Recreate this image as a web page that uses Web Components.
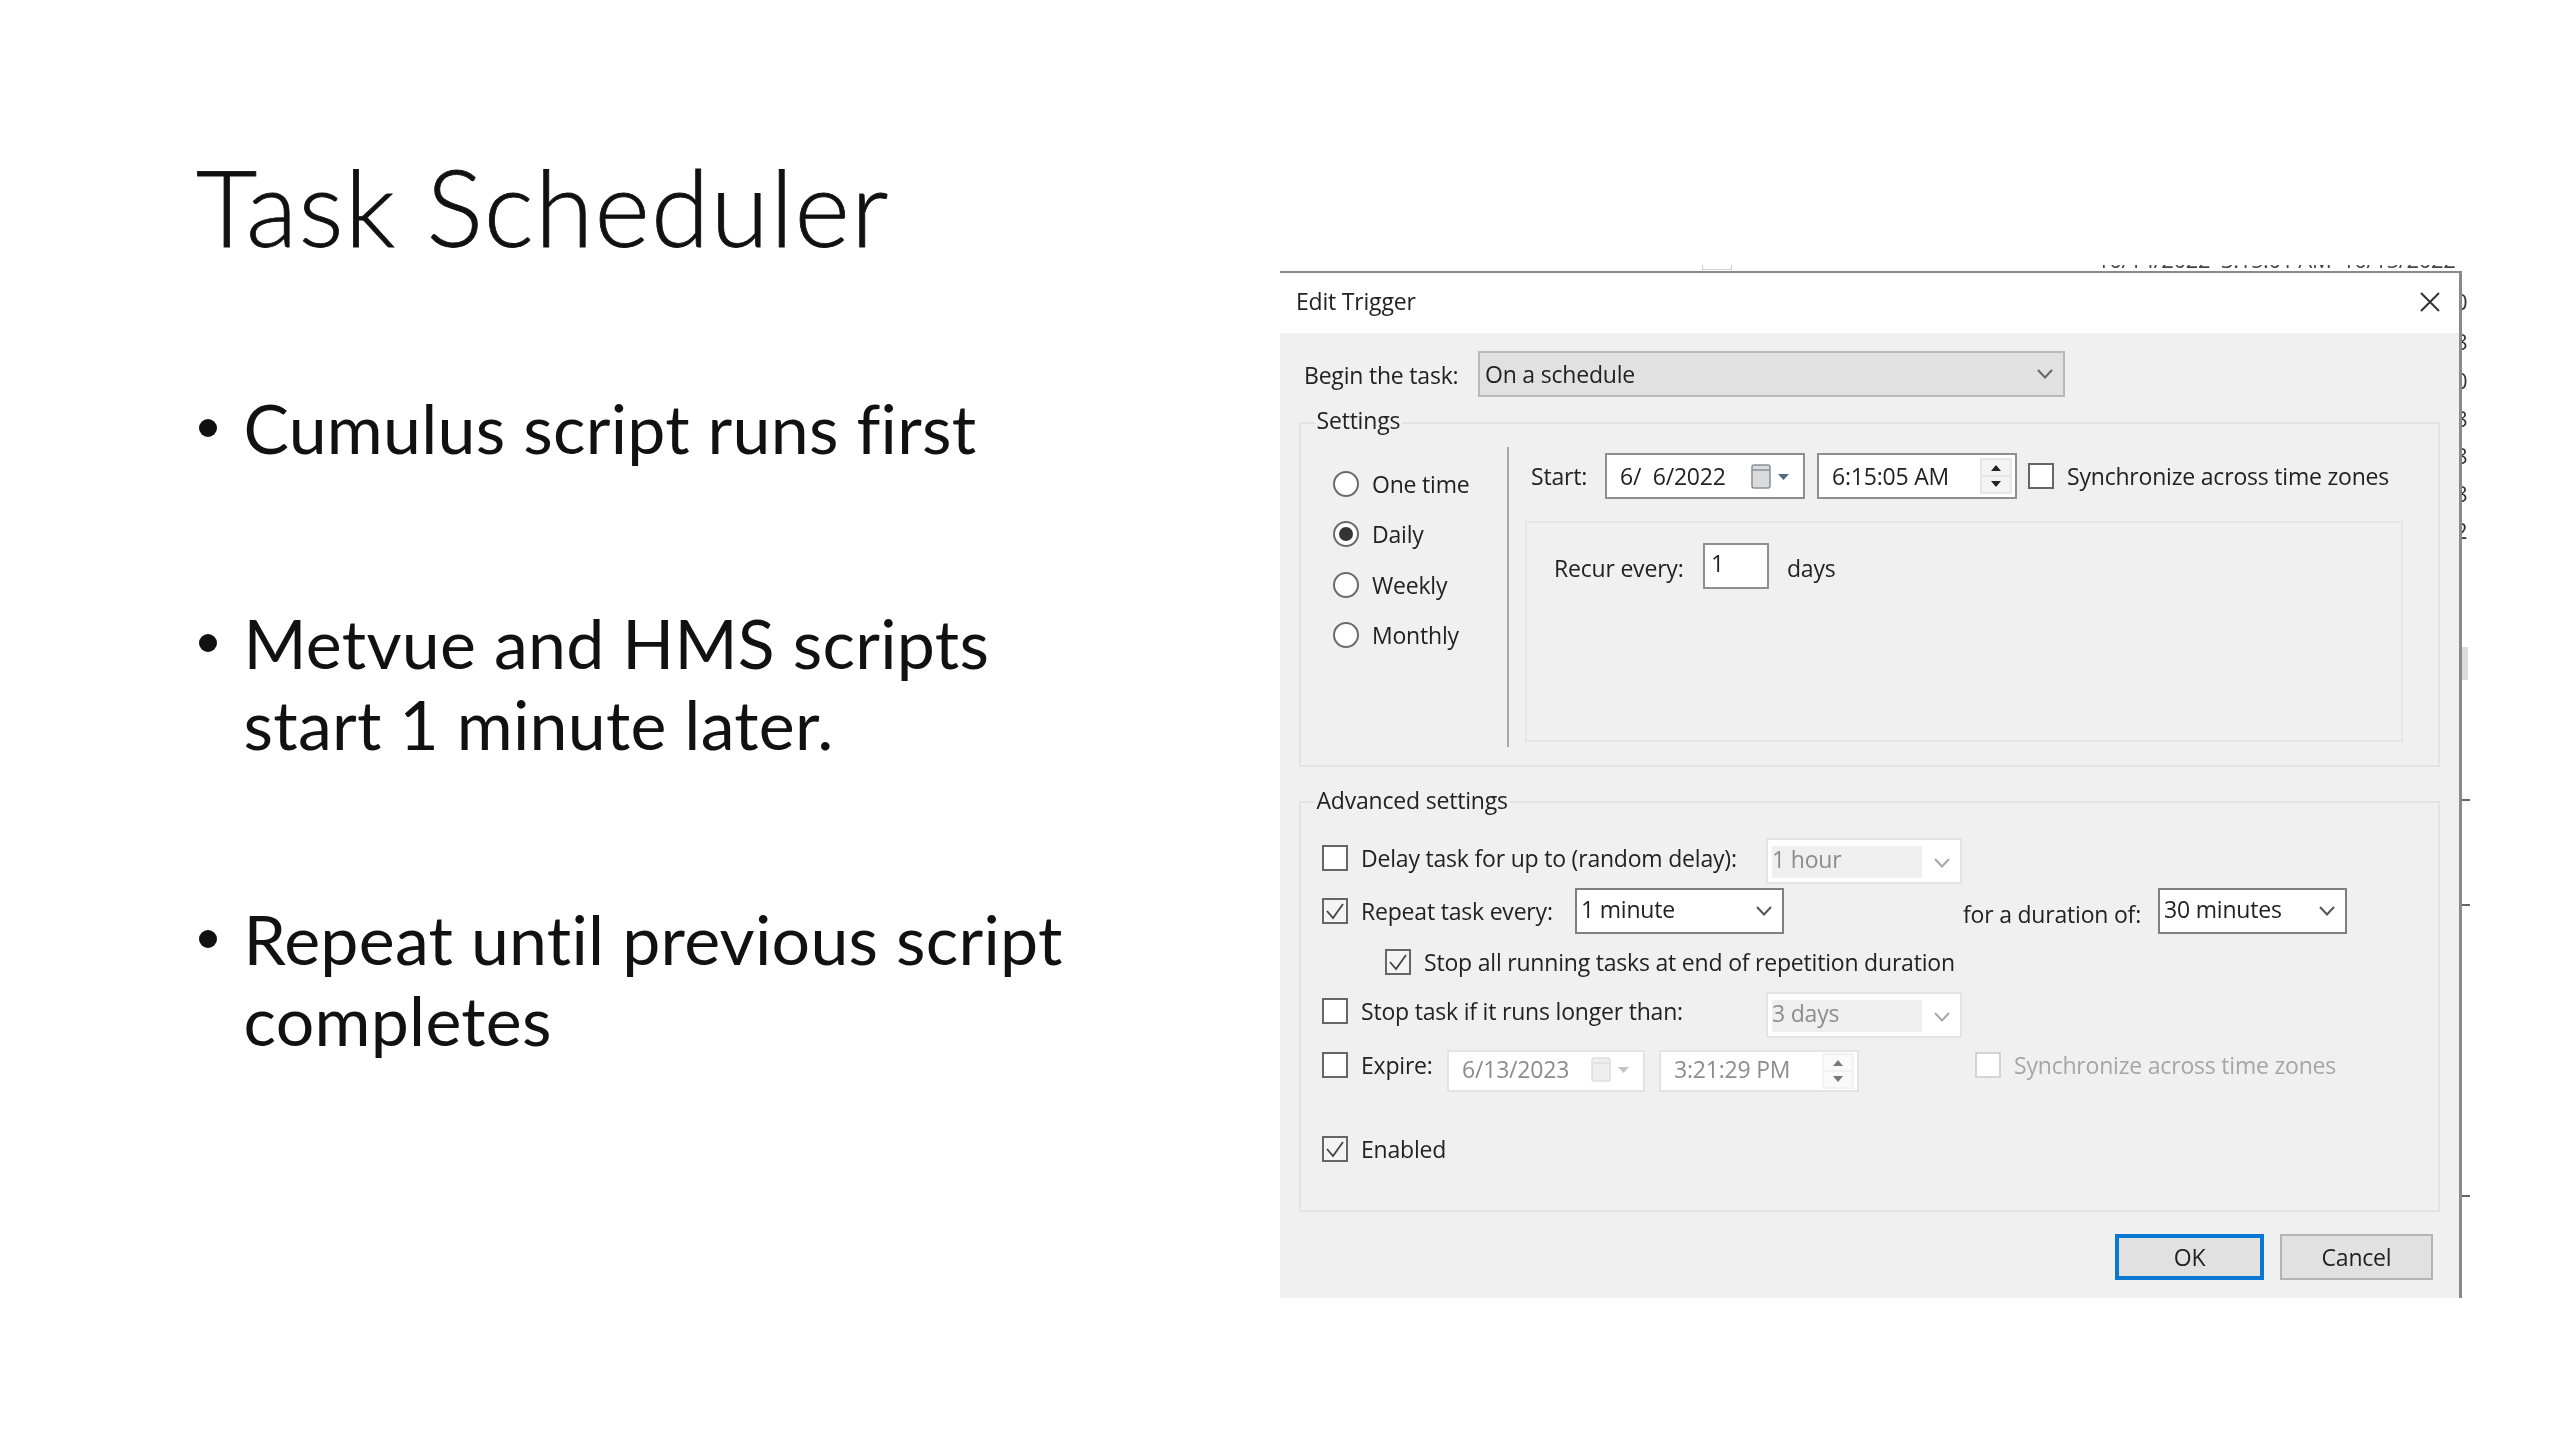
<!DOCTYPE html>
<html>
<head>
<meta charset="utf-8">
<title>Task Scheduler</title>
<style>
  html, body { margin: 0; padding: 0; background: #fff; }
</style>
</head>
<body>
<task-slide></task-slide>

<script>
const UI_FONT = `"Open Sans", "Noto Sans", sans-serif`

// A bullet line on the slide
class SlideBullet extends HTMLElement {
  constructor() {
    super()
    this.attachShadow({ mode: 'open' }).innerHTML = `
      <style>
        :host { display: flex; font: 400 68px/81px Lato, sans-serif; color: #111; letter-spacing: 0.28px; }
        .dot { flex: none; width: 18px; height: 18px; margin: 32px 26.5px 0 3px; border-radius: 50%; background: #111; }
      </style>
      <div class="dot"></div>
      <div><slot></slot></div>`
  }
}
customElements.define('slide-bullet', SlideBullet)

class WinRadio extends HTMLElement {
  constructor() {
    super()
    const dot = this.hasAttribute('checked') ? '<div class="dot"></div>' : ''
    this.attachShadow({ mode: 'open' }).innerHTML = `
      <style>
        :host { display: flex; align-items: center; height: 50.5px; gap: 13px; }
        .ring { box-sizing: border-box; width: 26px; height: 26px; border: 2px solid #6a6a6a; border-radius: 50%;
                background: #fff; display: flex; align-items: center; justify-content: center; }
        .dot { width: 14px; height: 14px; border-radius: 50%; background: #333; }
      </style>
      <div class="ring">${dot}</div>
      <span><slot></slot></span>`
  }
}
customElements.define('win-radio', WinRadio)

class WinCheck extends HTMLElement {
  constructor() {
    super()
    const off = this.hasAttribute('disabled')
    const tick = this.hasAttribute('checked')
      ? '<svg width="22" height="22" viewBox="0 0 22 22"><polyline points="3,11 9,18 19,4" fill="none" stroke="#444" stroke-width="1.8"/></svg>'
      : ''
    this.attachShadow({ mode: 'open' }).innerHTML = `
      <style>
        :host { display: flex; align-items: center; gap: 13px; flex: none; color: ${off ? '#a6a6a6' : 'inherit'}; }
        .box { box-sizing: border-box; flex: none; width: 26px; height: 26px; border: 2px solid ${off ? '#d4d4d4' : '#666'};
               background: ${tick ? '#f4f4f4' : '#fff'}; display: flex; align-items: center; justify-content: center; }
        svg { display: block; }
      </style>
      <div class="box">${tick}</div>
      <span><slot></slot></span>`
  }
}
customElements.define('win-check', WinCheck)

class WinCombo extends HTMLElement {
  constructor() {
    super()
    const off = this.hasAttribute('disabled')
    const flat = this.hasAttribute('flat')
    let bg = '#fff', line = '#7f7f7f', chev = '#555', color = '#222'
    if (flat) { bg = '#e1e1e1'; line = '#b9b9b9'; chev = '#666' }
    if (off) { line = '#e4e4e4'; chev = '#a8a8a8'; color = '#8c8c8c' }
    this.attachShadow({ mode: 'open' }).innerHTML = `
      <style>
        :host { display: block; flex: none; box-sizing: border-box; height: 46px; border: 2px solid ${line}; background: ${bg};
                color: ${color}; }
        .in { display: flex; align-items: center; justify-content: space-between; height: 100%; padding: ${off ? '4px' : '0'} 10px 0 ${flat ? '5px' : '4px'}; box-sizing: border-box; }
        .val { ${off ? 'background:#efefef; height: 32px; line-height: 27px; width: 150px; margin-top: -2px;' : `margin-top: ${flat ? '-1px' : '-4px'};`} white-space: pre; }
        svg { display: block; flex: none; }
      </style>
      <div class="in">
        <div class="val"><slot></slot></div>
        <svg width="16" height="10" viewBox="0 0 16 10"><polyline points="1,1 8,8.5 15,1" fill="none" stroke="${chev}" stroke-width="2"/></svg>
      </div>`
  }
}
customElements.define('win-combo', WinCombo)

class WinDate extends HTMLElement {
  constructor() {
    super()
    const off = this.hasAttribute('disabled')
    this.attachShadow({ mode: 'open' }).innerHTML = `
      <style>
        :host { display: flex; align-items: center; justify-content: space-between; flex: none; box-sizing: border-box;
                height: 46px; width: 200px; padding: 0 12px ${off ? '3px' : '0'} 13px; background: #fff;
                border: 2px solid ${off ? '#e4e4e4' : '#8f8f8f'}; color: ${off ? '#8c8c8c' : '#222'}; }
        span { white-space: pre; }
        svg { display: block; flex: none; }
      </style>
      <span><slot></slot></span>
      <svg width="40" height="26" viewBox="0 0 40 26">
        <rect x="1" y="2" width="18" height="23" rx="2" fill="${off ? '#eeeeee' : '#d8dadd'}" stroke="${off ? '#dedede' : '#8a8f96'}" stroke-width="1.5"/>
        <path d="M1 7h18" stroke="${off ? '#dedede' : '#8a8f96'}" stroke-width="1.5"/>
        <polygon points="27,11 38,11 32.5,17" fill="${off ? '#c4c4c4' : '#4f6b86'}"/>
      </svg>`
  }
}
customElements.define('win-date', WinDate)

class WinTime extends HTMLElement {
  constructor() {
    super()
    const off = this.hasAttribute('disabled')
    this.attachShadow({ mode: 'open' }).innerHTML = `
      <style>
        :host { display: flex; align-items: center; justify-content: space-between; flex: none; box-sizing: border-box;
                height: 46px; width: 200px; padding: 0 3px 0 13px; background: #fff;
                border: 2px solid ${off ? '#e4e4e4' : '#8f8f8f'}; color: ${off ? '#8c8c8c' : '#222'}; }
        span { ${off ? 'margin-top: -3px;' : ''} }
        svg { display: block; flex: none; }
      </style>
      <span><slot></slot></span>
      <svg width="32" height="36" viewBox="0 0 32 36">
        <rect width="32" height="36" fill="${off ? '#f2f2f2' : '#e6e6e6'}"/>
        <rect x="2" y="2" width="28" height="15" fill="${off ? '#fafafa' : '#f3f3f3'}"/>
        <rect x="2" y="19" width="28" height="15" fill="${off ? '#fafafa' : '#f3f3f3'}"/>
        <polygon points="16,7 21,13 11,13" fill="${off ? '#777' : '#222'}"/>
        <polygon points="16,29 21,23 11,23" fill="${off ? '#777' : '#222'}"/>
      </svg>`
  }
}
customElements.define('win-time', WinTime)

class WinButton extends HTMLElement {
  constructor() {
    super()
    const main = this.hasAttribute('default')
    this.attachShadow({ mode: 'open' }).innerHTML = `
      <style>
        :host { display: flex; align-items: center; justify-content: center; box-sizing: border-box; height: 46px;
                background: #e1e1e1; border: ${main ? '4px solid #0a78d2' : '2px solid #b4b4b4'}; color: #222; }
      </style>
      <slot></slot>`
  }
}
customElements.define('win-button', WinButton)

class GroupBox extends HTMLElement {
  constructor() {
    super()
    this.attachShadow({ mode: 'open' }).innerHTML = `
      <style>
        :host { display: block; box-sizing: border-box; border: 2px solid #e3e3e3; }
        .legend { width: fit-content; height: 30px; line-height: var(--legend-line, 25px); margin: -16px 0 0 13.5px; padding: 0 2px; background: #f0f0f0; }
      </style>
      <div class="legend">${this.getAttribute('legend')}</div>
      <slot></slot>`
  }
}
customElements.define('group-box', GroupBox)

// The Edit Trigger window with everything in it
class EditTrigger extends HTMLElement {
  constructor() {
    super()
    this.attachShadow({ mode: 'open' }).innerHTML = `
      <style>
        :host { display: block; font: 400 23px/30px ${UI_FONT}; letter-spacing: -0.2px; color: #222; filter: blur(0.7px); }
        .win { box-sizing: border-box; width: 1182px; height: 1027px; border-top: 2px solid #8a8a8a; border-right: 3px solid #8a8a8a;
               display: flex; flex-direction: column; background: #fff; }
        .title { flex: none; height: 60px; display: flex; align-items: center; justify-content: space-between; padding: 0 18px 0 16px; }
        .title span { margin-top: -4px; }
        .title svg { display: block; margin-top: -3px; }
        .body { flex: 1; background: #f0f0f0; padding: 18px 19px 0 19px; }
        .begin { display: flex; align-items: center; height: 46px; padding-left: 5px; }
        .begin .lbl { width: 174px; margin-top: 1px; }
        group-box.settings { height: 345px; margin-top: 25px; --legend-line: 25px; }
        .cols { display: flex; }
        .radios { width: 174px; padding: 20.5px 0 0 32px; }
        .right { box-sizing: border-box; margin-top: 9px; height: 300px; border-left: 2px solid #a9a9a9; padding: 6px 0 0 22px; }
        .start { display: flex; align-items: center; height: 46px; }
        .start .lbl { width: 74px; }
        .start win-time { margin: 0 11px 0 12px; }
        .recur { box-sizing: border-box; width: 878px; height: 221px; margin: 22px 0 0 -6px; border: 2px solid #e5e5e5; padding: 20px 0 0 27px; }
        .recur-row { display: flex; align-items: center; height: 46px; }
        .recur-row .lbl { width: 149px; margin-top: 3px; }
        .recur-row .days { margin-top: 3px; }
        .num { box-sizing: border-box; width: 66px; height: 46px; margin-right: 18px; padding: 0 6px; background: #fff; border: 2px solid #8f8f8f; line-height: 36px; }
        group-box.adv { height: 411px; margin-top: 34px; --legend-line: 27px; }
        .rows { padding: 21px 0 0 21px; }
        .row { display: flex; align-items: center; height: 46px; }
        .btns { display: flex; justify-content: flex-end; gap: 16px; margin-top: 21.5px; padding-right: 7px; }
      </style>
      <div class="win">
        <div class="title">
          <span>Edit Trigger</span>
          <svg width="22" height="22" viewBox="0 0 22 22"><path d="M2 2L20 20M20 2L2 20" stroke="#333" stroke-width="2"/></svg>
        </div>
        <div class="body">
          <div class="begin">
            <span class="lbl">Begin the task:</span>
            <win-combo flat style="width:587px">On a schedule</win-combo>
          </div>

          <group-box class="settings" legend="Settings">
            <div class="cols">
              <div class="radios">
                <win-radio>One time</win-radio>
                <win-radio checked>Daily</win-radio>
                <win-radio>Weekly</win-radio>
                <win-radio>Monthly</win-radio>
              </div>
              <div class="right">
                <div class="start">
                  <span class="lbl">Start:</span>
                  <win-date>6/  6/2022</win-date>
                  <win-time>6:15:05 AM</win-time>
                  <win-check>Synchronize across time zones</win-check>
                </div>
                <div class="recur">
                  <div class="recur-row">
                    <span class="lbl">Recur every:</span>
                    <div class="num">1</div>
                    <span class="days">days</span>
                  </div>
                </div>
              </div>
            </div>
          </group-box>

          <group-box class="adv" legend="Advanced settings">
            <div class="rows">
              <div class="row">
                <win-check style="width:444px;margin-bottom:6px">Delay task for up to (random delay):</win-check>
                <win-combo disabled style="width:196px">1 hour</win-combo>
              </div>
              <div class="row" style="margin-top:4px">
                <win-check checked style="width:253px">Repeat task every:</win-check>
                <win-combo style="width:209px">1 minute</win-combo>
                <span style="width:195px;margin-left:179px;margin-top:6px">for a duration of:</span>
                <win-combo style="width:189px">30 minutes</win-combo>
              </div>
              <div class="row" style="margin-top:8.5px">
                <win-check checked style="margin-left:63px;margin-bottom:8px">Stop all running tasks at end of repetition duration</win-check>
              </div>
              <div class="row" style="margin-top:3px">
                <win-check style="width:444px;margin-bottom:7px">Stop task if it runs longer than:</win-check>
                <win-combo disabled style="width:196px">3 days</win-combo>
              </div>
              <div class="row" style="margin-top:10px">
                <win-check style="width:125px;margin-bottom:11px">Expire:</win-check>
                <win-date disabled style="width:198px;height:42px">6/13/2023</win-date>
                <win-time disabled style="height:42px;margin-left:14px">3:21:29 PM</win-time>
                <win-check disabled style="margin-left:116px;margin-bottom:11px">Synchronize across time zones</win-check>
              </div>
              <div class="row" style="margin-top:40.5px;height:30px">
                <win-check checked>Enabled</win-check>
              </div>
            </div>
          </group-box>

          <div class="btns">
            <win-button default style="width:149px">OK</win-button>
            <win-button style="width:153px">Cancel</win-button>
          </div>
        </div>
      </div>`
  }
}
customElements.define('edit-trigger', EditTrigger)

// Slivers of the window behind the dialog, cut off by its edges
class BehindTop extends HTMLElement {
  constructor() {
    super()
    this.attachShadow({ mode: 'open' }).innerHTML = `
      <style>
        :host { display: flex; height: 6px; overflow: hidden; width: 1182px; font: 400 22px/22px ${UI_FONT}; letter-spacing: -0.35px; color: #444; filter: blur(0.5px); }
        .box { flex: none; width: 28px; height: 4px; margin-left: 422px; border: 1px solid #ccc; border-top: 0; }
        .txt { flex: none; margin: -17px 0 0 365px; white-space: pre; }
      </style>
      <div class="box"></div>
      <div class="txt">10/14/2022  3:15:01 AM  10/15/2022</div>`
  }
}
customElements.define('behind-top', BehindTop)

class BehindSide extends HTMLElement {
  constructor() {
    super()
    const chars = [[20, '0'], [20, '8'], [19, '0'], [18, '8'], [17, '8'], [18, '8'], [17, '2']]
    const rows = chars.map(c => `<div class="ch" style="margin-top:${c[0]}px">${c[1]}</div>`).join('')
    this.attachShadow({ mode: 'open' }).innerHTML = `
      <style>
        :host { display: block; flex: none; width: 8px; height: 1027px; overflow: hidden; font: 400 22px/20px ${UI_FONT}; color: #333; filter: blur(0.4px); }
        .ch { height: 20px; margin-left: -7px; }
        .thumb { width: 6px; height: 33px; margin-top: 107px; background: #dcdcdc; }
        .tick { height: 2px; background: #666; }
      </style>
      ${rows}
      <div class="thumb"></div>
      <div class="tick" style="margin-top:119px"></div>
      <div class="tick" style="margin-top:103px"></div>
      <div class="tick" style="margin-top:289px"></div>`
  }
}
customElements.define('behind-side', BehindSide)

// The whole slide
class TaskSlide extends HTMLElement {
  constructor() {
    super()
    this.attachShadow({ mode: 'open' }).innerHTML = `
      <style>
        :host { display: flex; width: 2560px; height: 1440px; overflow: hidden; background: #fff; }
        .text { box-sizing: border-box; flex: none; width: 1280px; padding: 146px 0 0 196px; filter: blur(0.6px); }
        h1 { margin: 0 0 120.5px; font: 300 106px/120px Lato, sans-serif; color: #111; letter-spacing: 1.2px; -webkit-text-stroke: 0.8px #111; }
        slide-bullet + slide-bullet { margin-top: 134px; }
        .shot { flex: none; padding-top: 265px; }
        .main { display: flex; }
      </style>
      <div class="text">
        <h1>Task Scheduler</h1>
        <slide-bullet>Cumulus script runs first</slide-bullet>
        <slide-bullet>Metvue and HMS scripts<br>start 1 minute later.</slide-bullet>
        <slide-bullet>Repeat until previous script<br>completes</slide-bullet>
      </div>
      <div class="shot">
        <behind-top></behind-top>
        <div class="main">
          <edit-trigger></edit-trigger>
          <behind-side></behind-side>
        </div>
      </div>`
  }
}
customElements.define('task-slide', TaskSlide)
</script>
</body>
</html>
